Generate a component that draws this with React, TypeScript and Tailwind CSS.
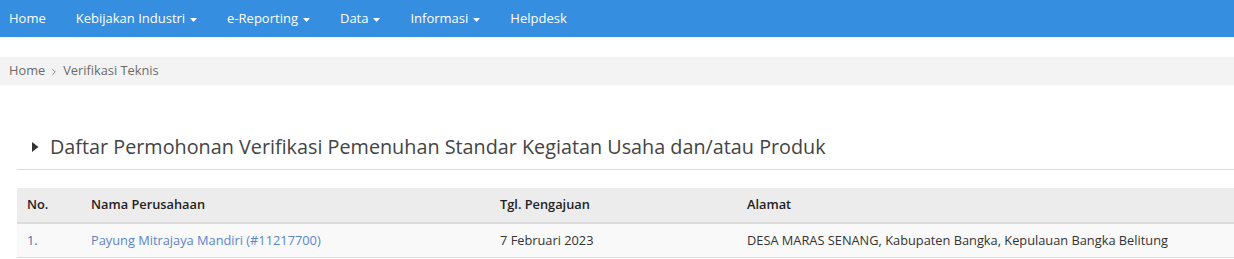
import { ChevronRight } from 'lucide-react';

const navItems = [
  { label: 'Home', caret: false },
  { label: 'Kebijakan Industri', caret: true },
  { label: 'e-Reporting', caret: true },
  { label: 'Data', caret: true },
  { label: 'Informasi', caret: true },
  { label: 'Helpdesk', caret: false },
];

function Caret() {
  return (
    <svg width="7" height="4" viewBox="0 0 7 4" className="ml-[5px] mt-[2px]">
      <path d="M0 0h7L3.5 4z" fill="currentColor" />
    </svg>
  );
}

export default function App() {
  return (
    <div className="w-[1234px] h-[259px] overflow-hidden bg-white font-['Open_Sans',sans-serif]">
      {/* Top navbar */}
      <nav className="h-[37px] bg-[#358ee0] flex items-center gap-[30px] pl-[9px] text-white text-[13px]">
        {navItems.map((item) => (
          <a key={item.label} className="flex items-center whitespace-nowrap">
            {item.label}
            {item.caret && <Caret />}
          </a>
        ))}
      </nav>

      {/* Breadcrumb */}
      <div className="mt-[20px] h-[28px] bg-[#f3f3f3] flex items-center px-[9px] text-[12.8px] text-[#6b6b6b]">
        <span>Home</span>
        <ChevronRight className="w-[10px] h-[10px] mx-[4px] mt-px" strokeWidth={2} />
        <span>Verifikasi Teknis</span>
      </div>

      {/* Section */}
      <div className="pl-[17px] pt-[50px]">
        <div className="flex items-center h-[24px] pl-[15px] border-b border-[#dcdcdc] pb-[10px] box-content">
          <svg width="7" height="10" viewBox="0 0 7 10" className="mr-[11px]">
            <path d="M0 0v10l6.5-5z" fill="#333" />
          </svg>
          <h2 className="text-[19.8px] text-[#444] leading-none whitespace-nowrap">
            Daftar Permohonan Verifikasi Pemenuhan Standar Kegiatan Usaha dan/atau Produk
          </h2>
        </div>

        <table className="mt-[18px] w-full text-left text-[12.8px] border-collapse">
          <thead>
            <tr className="bg-[#ececec] text-[#222] border-b-2 border-[#dcdcdc]">
              <th className="font-semibold h-[35px] pl-[10px] w-[74px]">No.</th>
              <th className="font-semibold w-[409px]">Nama Perusahaan</th>
              <th className="font-semibold w-[247px]">Tgl. Pengajuan</th>
              <th className="font-semibold">Alamat</th>
            </tr>
          </thead>
          <tbody>
            <tr className="bg-[#f9f9f9] border-b border-[#dcdcdc]">
              <td className="h-[34px] pl-[10px] text-[#4a6fb5]">1.</td>
              <td className="text-[#5b84cc]">Payung Mitrajaya Mandiri (#11217700)</td>
              <td className="text-[#333]">7 Februari 2023</td>
              <td className="text-[#333] whitespace-nowrap">
                DESA MARAS SENANG, Kabupaten Bangka, Kepulauan Bangka Belitung
              </td>
            </tr>
          </tbody>
        </table>
      </div>
    </div>
  );
}
